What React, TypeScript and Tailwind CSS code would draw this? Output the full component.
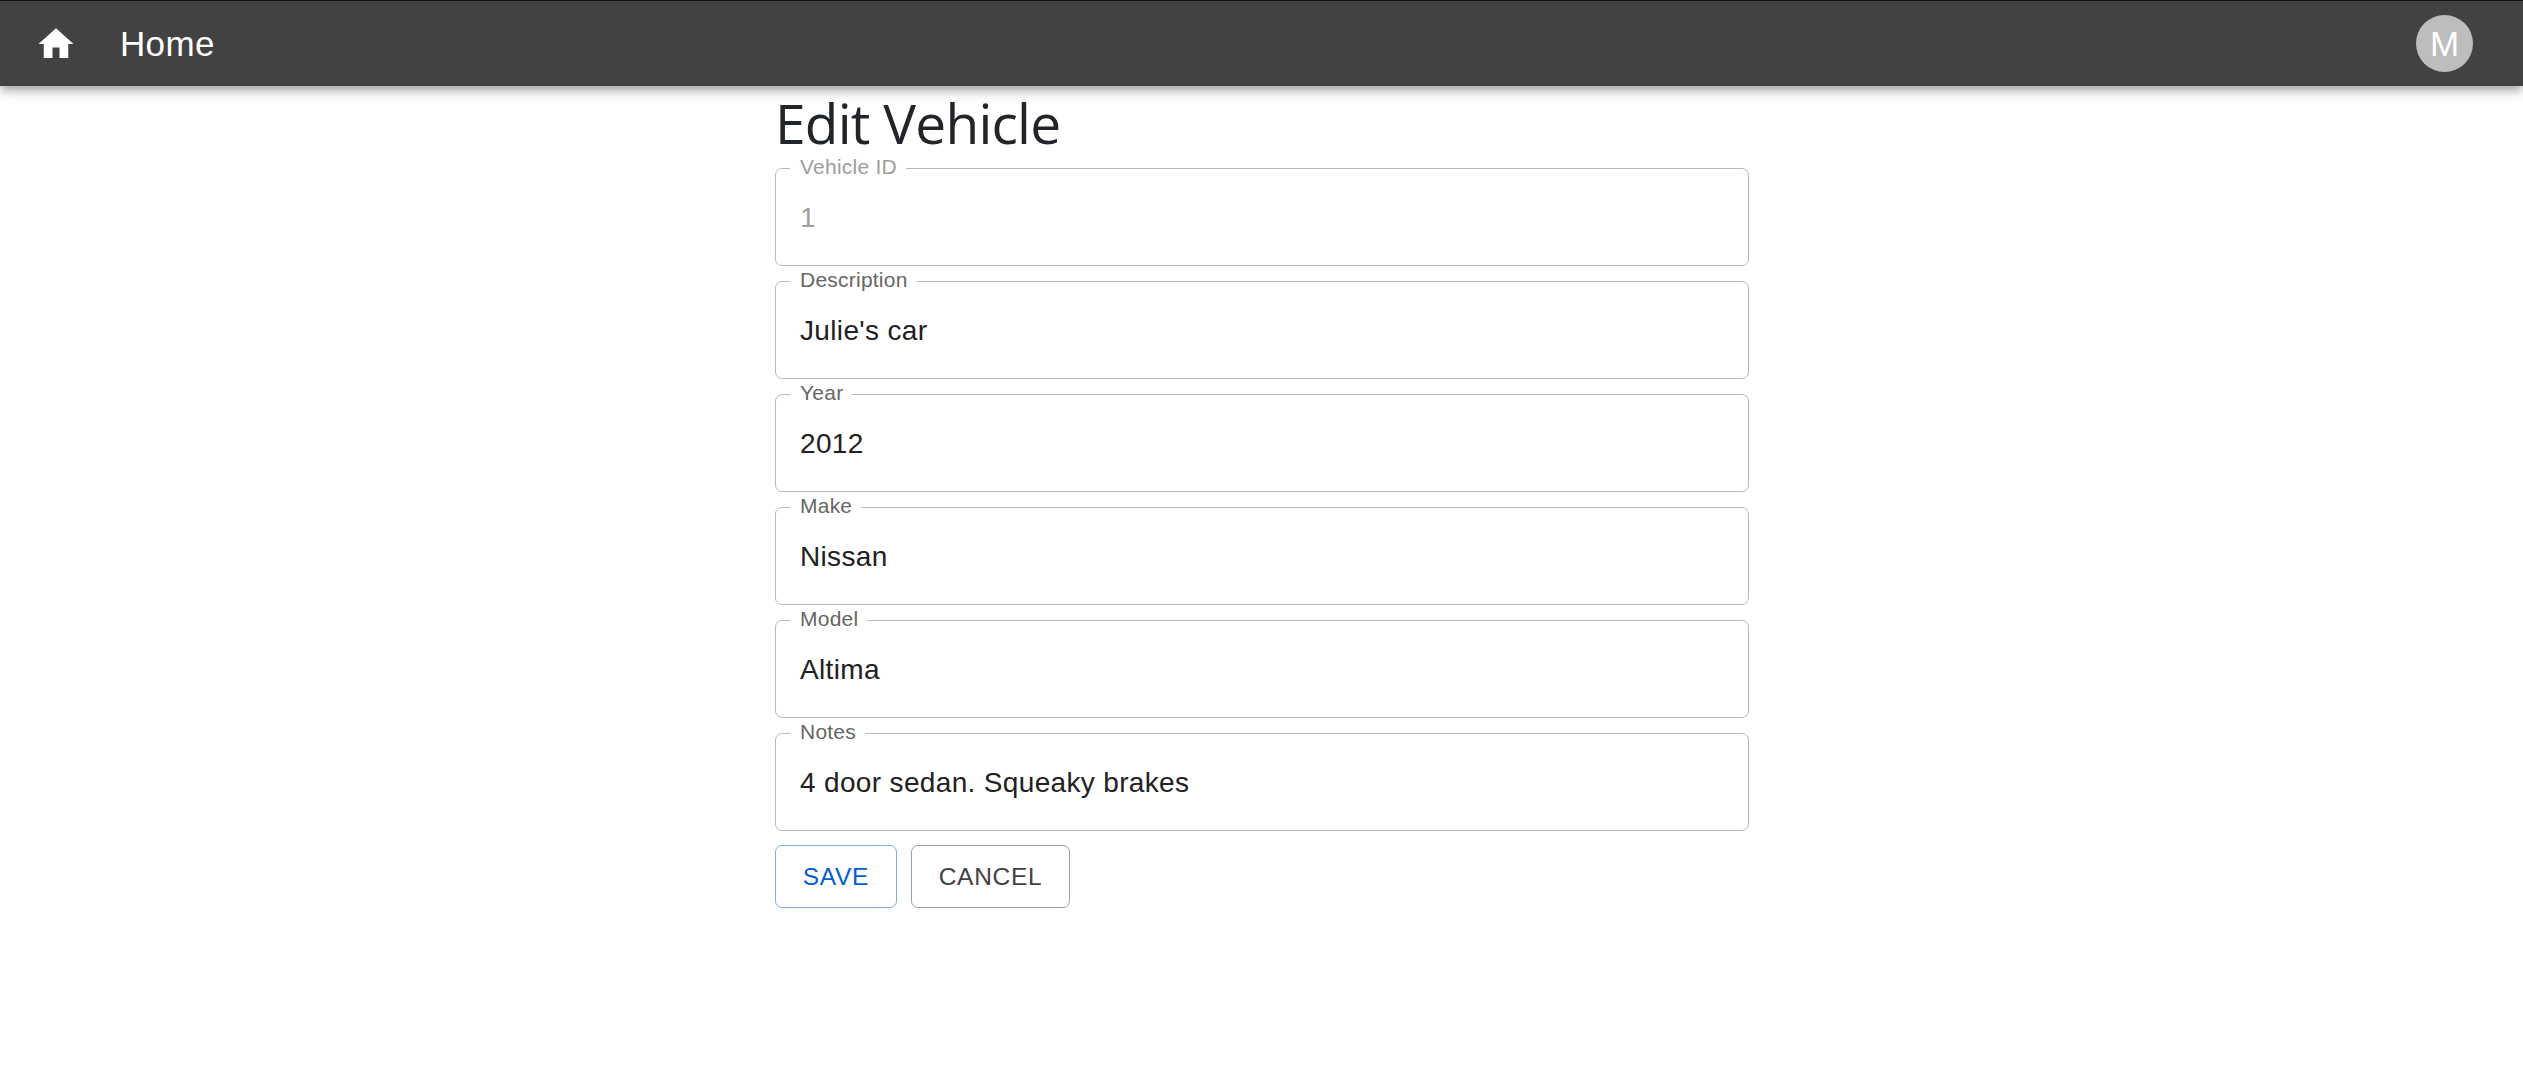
const fields = [
  { label: 'Vehicle ID', value: '1', disabled: true },
  { label: 'Description', value: "Julie's car" },
  { label: 'Year', value: '2012' },
  { label: 'Make', value: 'Nissan' },
  { label: 'Model', value: 'Altima' },
  { label: 'Notes', value: '4 door sedan. Squeaky brakes' },
];

function Field({ label, value, disabled = false }: { label: string; value: string; disabled?: boolean }) {
  return (
    <fieldset className="h-[98px] rounded-[7px] border border-[#b9b9b9] pl-[14px]">
      <legend
        className={`flex h-px items-center pr-[9px] pl-[10px] text-[21px] leading-[24px] tracking-[0.011em] whitespace-nowrap ${
          disabled ? 'text-[#9e9e9e]' : 'text-[#666666]'
        }`}
      >
        <span className="-mt-[3px]">{label}</span>
      </legend>
      <div
        className={`flex h-[96px] items-center pt-[2px] pl-[10px] text-[28px] leading-[40px] tracking-[0.0122em] ${
          disabled ? 'text-[#9e9e9e]' : 'text-[#212121]'
        }`}
      >
        {value}
      </div>
    </fieldset>
  );
}

export default function App() {
  return (
    <div className="min-h-[1067px] bg-white font-['Liberation_Sans',Arial,sans-serif]">
      <header className="relative flex h-[86px] items-center border-t border-[#121212] bg-[#424242] pr-[50px] pl-[35px] text-white shadow-[0_3.5px_7px_-1.75px_rgba(0,0,0,0.2),0_7px_8.75px_0_rgba(0,0,0,0.14),0_1.75px_17.5px_0_rgba(0,0,0,0.12)]">
        <svg viewBox="0 0 24 24" className="size-[42px]" fill="currentColor">
          <path d="M10 20v-6h4v6h5v-8h3L12 3 2 12h3v8z" />
        </svg>
        <div className="ml-[43px] text-[35px] leading-[56px] tracking-[0.0095em]">Home</div>
        <div className="ml-auto flex size-[57px] items-center justify-center rounded-full bg-[#bdbdbd] text-[35px] leading-none">
          M
        </div>
      </header>
      <main className="ml-[775px] w-[974px]">
        <h1 className="mb-[12px] flex h-[70px] items-center pt-[3px] font-['Open_Sans',sans-serif] text-[55px] leading-[56px] tracking-[-0.75px] text-[#212529]">
          Edit Vehicle
        </h1>
        <form className="flex flex-col gap-[15px]">
          {fields.map((f) => (
            <Field key={f.label} {...f} />
          ))}
          <div className="-mt-px flex gap-[14px] text-[24.5px] tracking-[0.02857em]">
            <button type="button" className="h-[63px] w-[122px] rounded-[7px] border border-[#7fafe8] pt-px text-[#0060cf]">
              SAVE
            </button>
            <button type="button" className="h-[63px] w-[159px] rounded-[7px] border border-[#9e9e9e] pt-px text-[#424242]">
              CANCEL
            </button>
          </div>
        </form>
      </main>
    </div>
  );
}
